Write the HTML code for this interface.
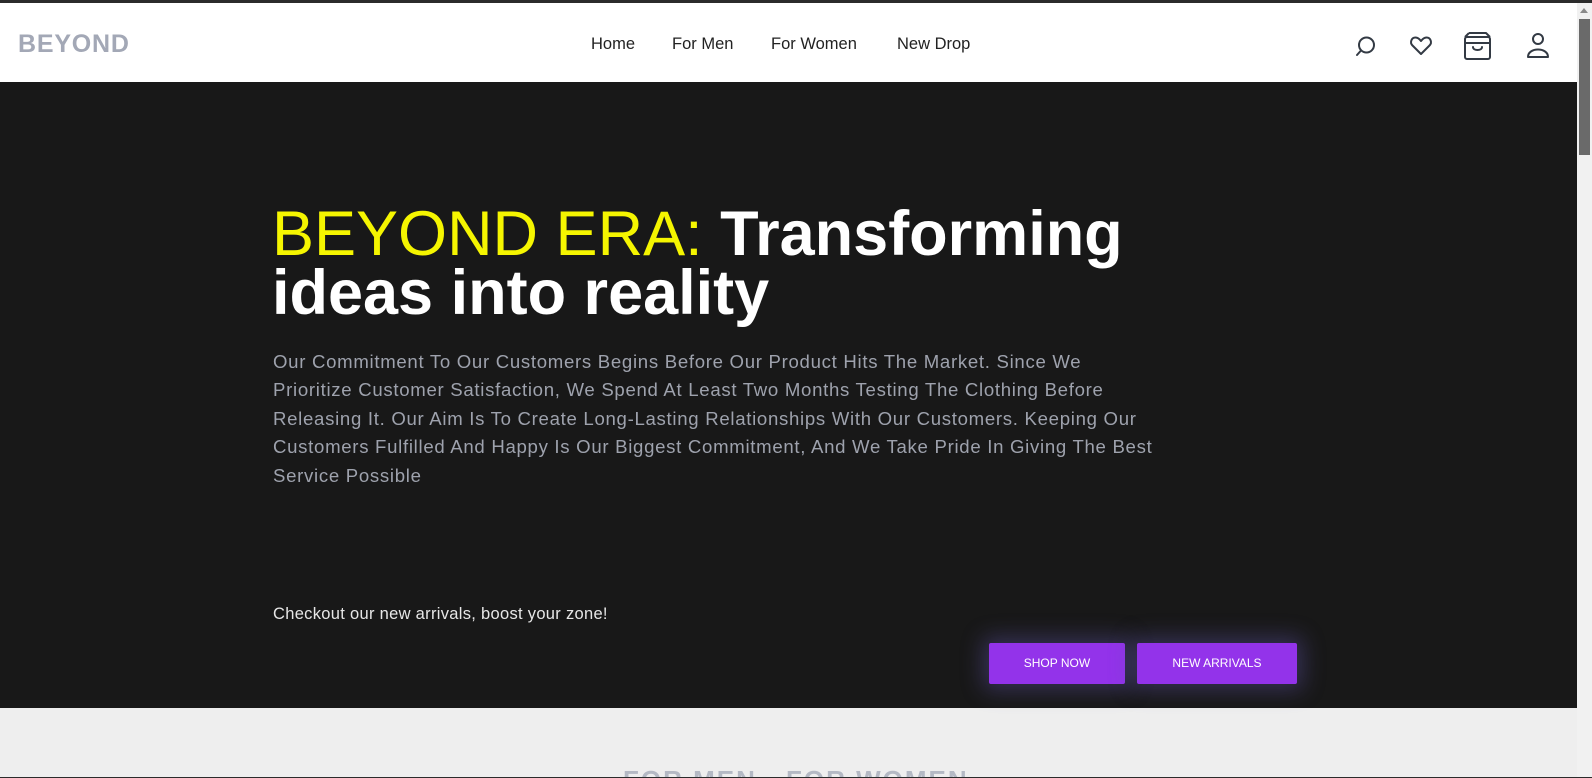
<!DOCTYPE html>
<html><head><meta charset="utf-8"><style>
*{margin:0;padding:0;box-sizing:border-box}
html,body{width:1592px;height:778px;overflow:hidden;background:#2b2b2b;font-family:"Liberation Sans",sans-serif}
#page{position:absolute;left:0;top:3px;width:1577px;height:774px;background:#eeeeee;overflow:hidden}
#sb{position:absolute;left:1577px;top:3px;width:15px;height:774px;background:#f1f1f1}
#sb .th{position:absolute;left:2px;top:16px;width:11px;height:136px;background:#6a6a6a}
#sb .ar{position:absolute;left:3px;top:5px;width:0;height:0;border-left:4px solid transparent;border-right:4px solid transparent;border-bottom:5px solid #8a8a8a}
header{position:absolute;left:0;top:0;width:1577px;height:79px;background:#fff}
.logo{position:absolute;left:18px;top:27px;font-size:25px;font-weight:bold;color:#a3a8b6;letter-spacing:0.8px}
nav span{position:absolute;top:32px;font-size:16.5px;color:#222;white-space:nowrap}
.ic{position:absolute}
.hero{position:absolute;left:0;top:79px;width:1577px;height:626px;background:#181818}
h1{position:absolute;left:272px;top:123px;font-size:63px;line-height:59px;color:#fff;font-weight:bold;white-space:nowrap;letter-spacing:0px}
h1 .y{color:#f5f500;font-weight:normal}
.p{position:absolute;left:273px;top:266px;font-size:18.6px;line-height:28.4px;color:#9ea2ad;white-space:nowrap;letter-spacing:0.7px}
.t{position:absolute;left:273px;top:523px;font-size:16.5px;color:#e6e6e6;letter-spacing:0.3px}
.btn{position:absolute;top:561px;height:41px;background:#9333ea;color:#fff;font-size:12px;text-align:center;line-height:41px;border-radius:2px;box-shadow:0 0 22px 6px rgba(90,80,160,0.45)}
.sec{position:absolute;left:623px;top:762px;font-size:26px;font-weight:bold;color:#b4b9c4;letter-spacing:2px}
</style></head><body>
<div id="page">
<header>
<div class="logo">BEYOND</div>
<nav><span style="left:591px">Home</span><span style="left:672px">For Men</span><span style="left:771px">For Women</span><span style="left:897px">New Drop</span></nav>
<svg class="ic" style="left:1354px;top:30px" width="24" height="26" viewBox="0 0 24 26" fill="none" stroke="#333a44" stroke-width="2" stroke-linecap="round"><circle cx="12.5" cy="12" r="7.5"/><path d="M7 17.5 3 22"/></svg>
<svg class="ic" style="left:1408px;top:30px" width="26" height="26" viewBox="0 0 26 26" fill="none" stroke="#333a44" stroke-width="2" stroke-linejoin="round"><path d="M13 21 4.5 12.5C1.5 9.5 3.5 4.5 7.5 4.5c2.5 0 4 1.5 5.5 3.5 1.5-2 3-3.5 5.5-3.5 4 0 6 5 3 8z"/></svg>
<svg class="ic" style="left:1463px;top:28px" width="30" height="30" viewBox="0 0 30 30" fill="none" stroke="#333a44" stroke-width="2" stroke-linejoin="round"><rect x="2" y="6" width="25" height="22" rx="2"/><path d="M2 12h25M6 2h17l4 4M6 2 2 6"/><path d="M10 16c0 4 9 4 9 0" stroke-linecap="round"/></svg>
<svg class="ic" style="left:1526px;top:29px" width="24" height="28" viewBox="0 0 24 28" fill="none" stroke="#333a44" stroke-width="2"><circle cx="12" cy="7" r="5"/><path d="M2 25c0-10 20-10 20 0z" stroke-linejoin="round"/></svg>
</header>
<div class="hero">
<h1><span class="y">BEYOND ERA:</span> Transforming<br>ideas into reality</h1>
<div class="p">Our Commitment To Our Customers Begins Before Our Product Hits The Market. Since We<br>Prioritize Customer Satisfaction, We Spend At Least Two Months Testing The Clothing Before<br>Releasing It. Our Aim Is To Create Long-Lasting Relationships With Our Customers. Keeping Our<br>Customers Fulfilled And Happy Is Our Biggest Commitment, And We Take Pride In Giving The Best<br>Service Possible</div>
<div class="t">Checkout our new arrivals, boost your zone!</div>
<div class="btn" style="left:989px;width:136px">SHOP NOW</div>
<div class="btn" style="left:1137px;width:160px">NEW ARRIVALS</div>
</div>
<div class="sec">FOR MEN · FOR WOMEN</div>
</div>
<div id="sb"><div class="ar"></div><div class="th"></div></div>
</body></html>
